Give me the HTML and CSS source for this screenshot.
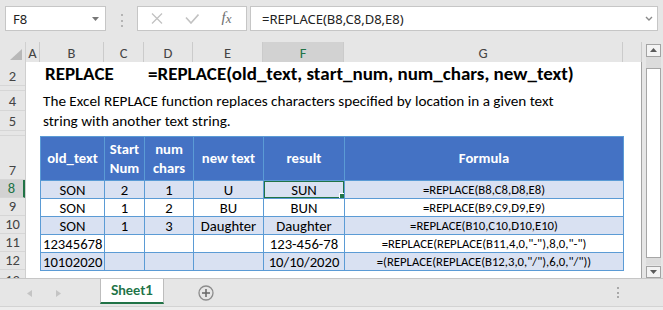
FILE: index.html
```html
<!DOCTYPE html>
<html lang="en">
<head>
    <meta charset="UTF-8">
    <meta name="viewport" content="width=device-width, initial-scale=1.0">
    <title>REPLACE</title>
    <link rel="stylesheet" href="styles.css">
</head>
<body>
    <div class="formula-bar">
        <div class="name-box">
            <span>F8</span>
            <svg width="7" height="4" viewBox="0 0 7 4"><path d="M0 0h7L3.5 4z" fill="#777"/></svg>
        </div>
        <div class="grip"><i></i><i></i><i></i></div>
        <div class="fx-box">
            <span class="slot"><svg width="12" height="11" viewBox="0 0 12 11"><path d="M1 .5l10 10M11 .5l-10 10" stroke="#c2c2c2" stroke-width="1.3" fill="none"/></svg></span>
            <span class="slot"><svg width="14" height="10" viewBox="0 0 14 10"><path d="M1 3.5l5 5.5 7.5-8.5" stroke="#c2c2c2" stroke-width="1.6" fill="none"/></svg></span>
            <span class="slot fx"><i>f</i><i class="x">x</i></span>
        </div>
        <div class="formula-input">
            <span>=REPLACE(B8,C8,D8,E8)</span>
            <svg width="8" height="5" viewBox="0 0 8 5"><path d="M1 1l3 3 3-3" stroke="#8a8a8a" stroke-width="1.4" fill="none"/></svg>
        </div>
    </div>

    <div class="sheet">
        <div class="corner"><svg width="12" height="11" viewBox="0 0 12 11"><path d="M12 0v11H0z" fill="#b8b8b8"/></svg></div>
        <div class="col-heads">
            <div>A</div><div>B</div><div>C</div><div>D</div><div>E</div>
            <div class="sel">F</div><div>G</div><div></div>
        </div>
        <div class="vscroll">
            <div class="sbtn"><svg width="7" height="4" viewBox="0 0 7 4"><path d="M0 4h7L3.5 0z" fill="#5a5a5a"/></svg></div>
            <div class="track"><div class="thumb"></div></div>
            <div class="sbtn"><svg width="7" height="4" viewBox="0 0 7 4"><path d="M0 0h7L3.5 4z" fill="#5a5a5a"/></svg></div>
        </div>
        <div class="row-heads">
            <div>2</div><div></div><div>4</div><div>5</div><div></div><div>7</div>
            <div class="sel">8</div><div>9</div><div>10</div><div>11</div><div>12</div><div>13</div>
        </div>
        <div class="cells">
            <div class="title">
                <span class="name">REPLACE</span>
                <span>=REPLACE(old_text, start_num, num_chars, new_text)</span>
            </div>
            <p class="desc">The Excel REPLACE function replaces characters specified by location in a given text<br>string with another text string.</p>
            <table class="data">
                <colgroup>
                    <col class="w-b"><col class="w-c"><col class="w-d"><col class="w-e"><col class="w-f"><col class="w-g">
                </colgroup>
                <tr>
                    <th>old_text</th><th>Start<br>Num</th><th>num<br>chars</th><th>new text</th><th>result</th><th>Formula</th>
                </tr>
                <tr class="band">
                    <td>SON</td><td>2</td><td>1</td><td>U</td><td class="active">SUN</td><td class="f">=REPLACE(B8,C8,D8,E8)</td>
                </tr>
                <tr>
                    <td>SON</td><td>1</td><td>2</td><td>BU</td><td>BUN</td><td class="f">=REPLACE(B9,C9,D9,E9)</td>
                </tr>
                <tr class="band">
                    <td>SON</td><td>1</td><td>3</td><td>Daughter</td><td>Daughter</td><td class="f">=REPLACE(B10,C10,D10,E10)</td>
                </tr>
                <tr>
                    <td class="l">12345678</td><td></td><td></td><td></td><td>123-456-78</td><td class="f">=REPLACE(REPLACE(B11,4,0,"-"),8,0,"-")</td>
                </tr>
                <tr class="band">
                    <td class="l">10102020</td><td></td><td></td><td></td><td>10/10/2020</td><td class="f">=(REPLACE(REPLACE(B12,3,0,"/"),6,0,"/"))</td>
                </tr>
            </table>
        </div>
    </div>

    <div class="tabs">
        <div class="nav">
            <svg width="5" height="7" viewBox="0 0 5 7"><path d="M5 0v7L0 3.5z" fill="#c4c4c4"/></svg>
            <svg width="5" height="7" viewBox="0 0 5 7"><path d="M0 0v7l5-3.5z" fill="#c4c4c4"/></svg>
        </div>
        <div class="tab">Sheet1</div>
        <svg class="add" width="16" height="16" viewBox="0 0 16 16"><circle cx="8" cy="8" r="7" fill="none" stroke="#8c8c8c" stroke-width="1.3"/><path d="M8 4v8M4 8h8" stroke="#666" stroke-width="1.5"/></svg>
        <div class="grip tab-grip"><i></i><i></i><i></i></div>
    </div>
    <div class="status"></div>
</body>
</html>
```

FILE: styles.css
```css
* {
    box-sizing: border-box;
}

body {
    margin: 0;
    width: 663px;
    height: 310px;
    overflow: hidden;
    background: #e6e6e6;
    font-family: "Noto Sans", "DejaVu Sans", sans-serif;
    color: #222;
}

/* formula bar */
.formula-bar {
    display: flex;
    align-items: flex-start;
    height: 42px;
    padding: 6px 0 0 5px;
}

.name-box {
    display: flex;
    align-items: center;
    justify-content: space-between;
    width: 101px;
    height: 25px;
    padding: 0 6px 0 7px;
    background: #fff;
    border: 1px solid #c6c6c6;
    font-size: 13px;
}

.grip {
    display: flex;
    flex-direction: column;
    align-items: center;
    gap: 3.5px;
    width: 31px;
    padding-top: 8px;
}

.grip i {
    width: 2px;
    height: 2px;
    background: #b4b4b4;
}

.fx-box {
    display: flex;
    align-items: center;
    width: 110px;
    height: 25px;
    padding-left: 1px;
    background: #fff;
    border: 1px solid #c6c6c6;
}

.slot {
    display: flex;
    justify-content: center;
    align-items: center;
    width: 35px;
}

.fx {
    font-family: "Liberation Serif", serif;
    font-size: 15px;
    color: #6e6e6e;
    padding-bottom: 2px;
}

.fx .x {
    font-size: 13px;
    position: relative;
    top: 1px;
}

.formula-input {
    display: flex;
    align-items: center;
    justify-content: space-between;
    width: 408px;
    height: 25px;
    margin-left: 3px;
    padding: 0 4px 0 11px;
    background: #fff;
    border: 1px solid #c6c6c6;
    font-size: 13px;
}

/* sheet grid */
.sheet {
    display: grid;
    grid-template-columns: 26px 616px 21px;
    grid-template-rows: 20px 216px;
    font-family: "Carlito", "Lato", sans-serif;
}

.corner {
    padding: 3px 0 0 10px;
    border-right: 1px solid #d0d0d0;
}

.col-heads {
    display: grid;
    grid-template-columns: 14px 64px 40px 49px 70px 81px 279px 19px;
}

.col-heads div {
    display: flex;
    align-items: center;
    justify-content: center;
    border-right: 1px solid #cbcbcb;
    font-size: 14.5px;
    color: #444;
}

.col-heads .sel {
    background: #d2d2d2;
    border-bottom: 2px solid #217346;
    color: #217346;
    padding-top: 2px;
}

.vscroll {
    grid-row: 1 / 3;
    grid-column: 3;
    display: flex;
    flex-direction: column;
    padding: 2px 2px 0 4px;
}

.sbtn {
    display: flex;
    align-items: center;
    justify-content: center;
    height: 14px;
    background: #f3f3f3;
    border: 1px solid #a3a3a3;
}

.track {
    flex: 1;
    background: #dcdcdc;
    padding: 11px 0 7px;
    margin-bottom: 1px;
}

.thumb {
    height: 190px;
    background: #fff;
    border: 1px solid #a6a6a6;
}

.row-heads {
    display: grid;
    grid-template-rows: 24px 5px 20px 20px 5px 44px 18px 18px 18px 18px 18px 20px;
    overflow: hidden;
    border-right: 1px solid #cfcfcf;
}

.row-heads div {
    display: flex;
    align-items: flex-end;
    justify-content: center;
    overflow: hidden;
    border-bottom: 1px solid #d6d6d6;
    font-size: 14.5px;
    line-height: 16px;
    padding-bottom: 1px;
    color: #444;
}

.row-heads .sel {
    background: #d2d2d2;
    border-right: 2px solid #217346;
    color: #217346;
}

.cells {
    background: #fff;
    border-right: 1px solid #a3a3a3;
    padding-left: 14px;
    overflow: hidden;
    color: #000;
}

.title {
    display: flex;
    height: 24px;
    line-height: 24px;
    font-size: 19px;
    font-weight: bold;
}

.title .name {
    width: 108px;
    padding-left: 5px;
}

.desc {
    margin: 5px 0 5px;
    padding-left: 3px;
    height: 40px;
    font-size: 15.2px;
    line-height: 20px;
    white-space: nowrap;
}

/* example table */
.data {
    border-collapse: collapse;
    table-layout: fixed;
    width: 584px;
    font-size: 14.67px;
}

.w-b { width: 64px; }
.w-c { width: 40px; }
.w-d { width: 49px; }
.w-e { width: 70px; }
.w-f { width: 81px; }
.w-g { width: 279px; }

.data th,
.data td {
    border: 1px solid #5b9bd5;
    padding: 0 2px;
    text-align: center;
    white-space: nowrap;
    overflow: hidden;
}

.data th {
    height: 44px;
    background: #4472c4;
    color: #fff;
    line-height: 19px;
}

.data td {
    height: 18px;
    line-height: 16px;
}

.data .band td {
    background: #d9e1f2;
}

.data td.l {
    text-align: left;
}

.data td.f {
    font-size: 12.7px;
}

.data td.active {
    position: relative;
}

.data td.active::after {
    content: "";
    position: absolute;
    top: -1px;
    left: -1px;
    right: -1px;
    bottom: -1px;
    border: 2px solid #217346;
}

.data td.active::before {
    content: "";
    position: absolute;
    right: -4px;
    bottom: -4px;
    width: 7px;
    height: 7px;
    background: #217346;
    border: 1px solid #fff;
    z-index: 1;
}

/* sheet tabs */
.tabs {
    display: flex;
    align-items: flex-start;
    height: 28px;
    border-top: 1px solid #c6c6c6;
}

.nav {
    display: flex;
    align-items: center;
    gap: 24px;
    width: 100px;
    height: 27px;
    padding: 2px 0 0 27px;
}

.tab {
    width: 64px;
    height: 25px;
    background: #fff;
    border: 1px solid #bdbdbd;
    border-top: none;
    border-bottom: 2px solid #217346;
    text-align: center;
    font-family: "Lato", sans-serif;
    font-weight: bold;
    font-size: 13.5px;
    line-height: 23px;
    color: #217346;
}

.add {
    margin: 6px 0 0 34px;
}

.tab-grip {
    margin-left: 402px;
    width: 4px;
    padding-top: 8px;
    gap: 2.5px;
}

.tab-grip i {
    background: #a8a8a8;
}

.status {
    height: 4px;
    border-top: 1px solid #d3d3d3;
    background: #ededed;
}
```
